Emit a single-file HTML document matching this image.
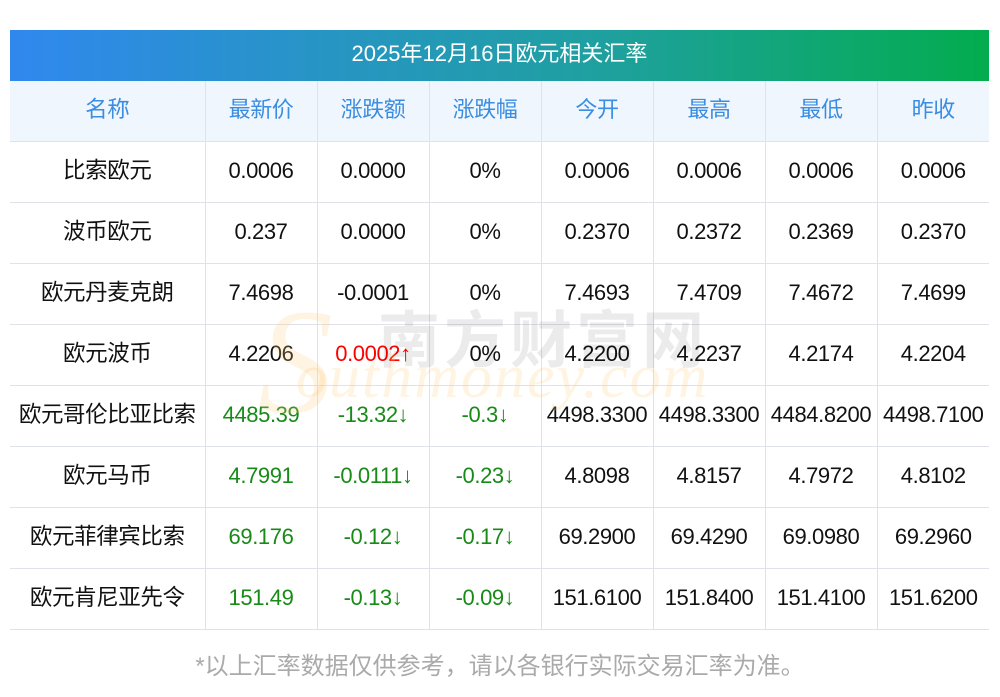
<!DOCTYPE html>
<html><head><meta charset="utf-8"><style>
body{margin:0;width:1000px;height:697px;background:#fff;position:relative;overflow:hidden;font-family:"Liberation Sans","Noto Sans CJK SC",sans-serif}
.title{position:absolute;left:10px;top:30px;width:979px;height:51px;background:linear-gradient(90deg,#3088ee,#1fa0a0 60%,#03ac4e);color:#fff;font-size:22px;line-height:48px;text-align:center}
table{position:absolute;left:10px;top:81px;width:979px;border-collapse:collapse;table-layout:fixed}
td{height:56px;border:1px solid #e0e2ea;text-align:center;font-size:22px;color:#111;padding:1px 0 3px 0;white-space:nowrap;letter-spacing:-0.4px;line-height:22px}
td:first-child{font-size:22.5px}
tr td:first-child{border-left:none}tr td:last-child{border-right:none}
tr.h td{background:#f0f6fe;color:#3a8de0;border-top:none}
.g{color:#188a18}.r{color:#f00}
.wm1{position:absolute;left:378px;top:290px;font-size:62px;color:rgba(0,0,0,0.08);letter-spacing:4px;font-family:"Noto Sans CJK SC",sans-serif;font-weight:bold}
.wm2{position:absolute;left:296px;top:342px;font-size:62px;color:rgba(253,200,120,0.22);font-style:italic;font-family:"Liberation Serif",serif;letter-spacing:2px}
.wm3{position:absolute;left:258px;top:276px;font-size:150px;color:rgba(253,200,120,0.22);font-style:italic;font-family:"Liberation Serif",serif}
.foot{position:absolute;left:0;width:1000px;top:646px;text-align:center;font-size:24px;color:#aaa}
</style></head><body>
<div class="title">2025年12月16日欧元相关汇率</div>
<table>
<colgroup><col style="width:195px"><col style="width:112px"><col style="width:112px"><col style="width:112px"><col style="width:112px"><col style="width:112px"><col style="width:112px"><col style="width:112px"></colgroup>
<tr class="h"><td>名称</td><td>最新价</td><td>涨跌额</td><td>涨跌幅</td><td>今开</td><td>最高</td><td>最低</td><td>昨收</td></tr>
<tr><td>比索欧元</td><td>0.0006</td><td>0.0000</td><td>0%</td><td>0.0006</td><td>0.0006</td><td>0.0006</td><td>0.0006</td></tr>
<tr><td>波币欧元</td><td>0.237</td><td>0.0000</td><td>0%</td><td>0.2370</td><td>0.2372</td><td>0.2369</td><td>0.2370</td></tr>
<tr><td>欧元丹麦克朗</td><td>7.4698</td><td>-0.0001</td><td>0%</td><td>7.4693</td><td>7.4709</td><td>7.4672</td><td>7.4699</td></tr>
<tr><td>欧元波币</td><td>4.2206</td><td class="r">0.0002↑</td><td>0%</td><td>4.2200</td><td>4.2237</td><td>4.2174</td><td>4.2204</td></tr>
<tr><td>欧元哥伦比亚比索</td><td class="g">4485.39</td><td class="g">-13.32↓</td><td class="g">-0.3↓</td><td>4498.3300</td><td>4498.3300</td><td>4484.8200</td><td>4498.7100</td></tr>
<tr><td>欧元马币</td><td class="g">4.7991</td><td class="g">-0.0111↓</td><td class="g">-0.23↓</td><td>4.8098</td><td>4.8157</td><td>4.7972</td><td>4.8102</td></tr>
<tr><td>欧元菲律宾比索</td><td class="g">69.176</td><td class="g">-0.12↓</td><td class="g">-0.17↓</td><td>69.2900</td><td>69.4290</td><td>69.0980</td><td>69.2960</td></tr>
<tr><td>欧元肯尼亚先令</td><td class="g">151.49</td><td class="g">-0.13↓</td><td class="g">-0.09↓</td><td>151.6100</td><td>151.8400</td><td>151.4100</td><td>151.6200</td></tr>
</table>
<div class="wm3">S</div>
<div class="wm1">南方财富网</div>
<div class="wm2">outhmoney.com</div>
<div class="foot">*以上汇率数据仅供参考，请以各银行实际交易汇率为准。</div>
</body></html>
